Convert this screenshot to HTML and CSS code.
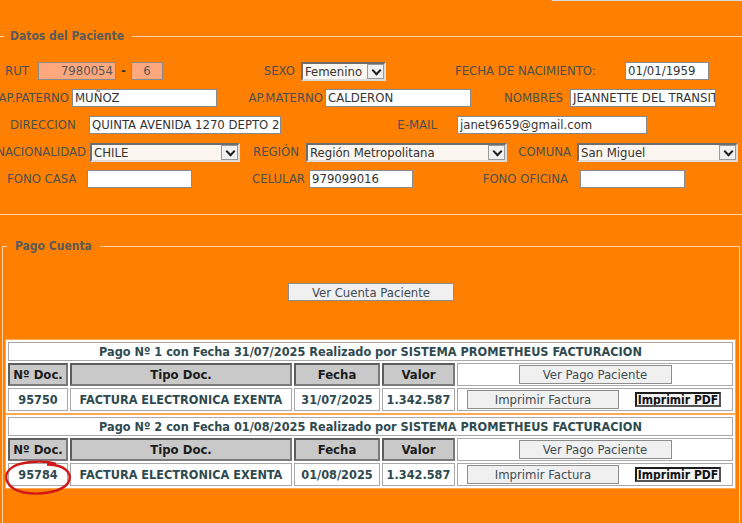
FILE: index.html
```html
<!DOCTYPE html>
<html lang="es">
<head>
<meta charset="utf-8">
<title>Datos del Paciente</title>
<link rel="stylesheet" href="styles.css">
</head>
<body>
<div class="topbar"><div class="sel topsel"><span class="val"></span><span class="arr"></span></div></div>

<fieldset class="fs fs-datos">
  <legend>Datos del Paciente</legend>
  <div class="rows">
    <div class="row">
      <span class="lbl l-rut">RUT</span>
      <span class="inp rut w78 tr">7980054</span>
      <span class="dash">-</span>
      <span class="inp rut w32 tc">6</span>
      <span class="lbl ra l-sexo">SEXO</span>
      <span class="sel w85"><span class="val">Femenino</span><span class="arr"></span></span>
      <span class="lbl l-fecha">FECHA DE NACIMIENTO:</span>
      <span class="inp w84">01/01/1959</span>
    </div>
    <div class="row">
      <span class="lbl ra l-pat">AP.PATERNO</span>
      <span class="inp w145">MUÑOZ</span>
      <span class="lbl ra l-mat">AP.MATERNO</span>
      <span class="inp w146">CALDERON</span>
      <span class="lbl ra l-nom">NOMBRES</span>
      <span class="inp w146">JEANNETTE DEL TRANSITO</span>
    </div>
    <div class="row">
      <span class="lbl l-dir">DIRECCION</span>
      <span class="inp w192">QUINTA AVENIDA 1270 DEPTO 205</span>
      <span class="lbl ra l-mail">E-MAIL</span>
      <span class="inp w190">janet9659@gmail.com</span>
    </div>
    <div class="row">
      <span class="lbl ra l-nac">NACIONALIDAD</span>
      <span class="sel w150"><span class="val">CHILE</span><span class="arr"></span></span>
      <span class="lbl ra l-reg">REGIÓN</span>
      <span class="sel w201"><span class="val">Región Metropolitana</span><span class="arr"></span></span>
      <span class="lbl ra l-com">COMUNA</span>
      <span class="sel w161"><span class="val">San Miguel</span><span class="arr"></span></span>
    </div>
    <div class="row">
      <span class="lbl l-casa">FONO CASA</span>
      <span class="inp w105"></span>
      <span class="lbl ra l-cel">CELULAR</span>
      <span class="inp w104">979099016</span>
      <span class="lbl ra l-ofi">FONO OFICINA</span>
      <span class="inp w105"></span>
    </div>
  </div>
</fieldset>

<fieldset class="fs fs-pago">
  <legend>Pago Cuenta</legend>
  <div class="center"><span class="btn b-cuenta">Ver Cuenta Paciente</span></div>
  <div class="pagos">
    <table class="pt">
      <colgroup><col class="c1"><col class="c2"><col class="c3"><col class="c4"><col class="c5"></colgroup>
      <tr class="tt"><td colspan="5">Pago Nº 1 con Fecha 31/07/2025 Realizado por SISTEMA PROMETHEUS FACTURACION</td></tr>
      <tr class="th"><th>Nº Doc.</th><th>Tipo Doc.</th><th>Fecha</th><th>Valor</th><td><div class="acts one"><span class="btn b-pago">Ver Pago Paciente</span></div></td></tr>
      <tr class="td"><td>95750</td><td>FACTURA ELECTRONICA EXENTA</td><td>31/07/2025</td><td>1.342.587</td><td><div class="acts"><span class="btn b-fact">Imprimir Factura</span><span class="btn b-pdf">Imprimir PDF</span></div></td></tr>
    </table>
    <table class="pt">
      <colgroup><col class="c1"><col class="c2"><col class="c3"><col class="c4"><col class="c5"></colgroup>
      <tr class="tt"><td colspan="5">Pago Nº 2 con Fecha 01/08/2025 Realizado por SISTEMA PROMETHEUS FACTURACION</td></tr>
      <tr class="th"><th>Nº Doc.</th><th>Tipo Doc.</th><th>Fecha</th><th>Valor</th><td><div class="acts one"><span class="btn b-pago">Ver Pago Paciente</span></div></td></tr>
      <tr class="td"><td>95784</td><td>FACTURA ELECTRONICA EXENTA</td><td>01/08/2025</td><td>1.342.587</td><td><div class="acts"><span class="btn b-fact">Imprimir Factura</span><span class="btn b-pdf">Imprimir PDF</span></div></td></tr>
    </table>
  </div>
</fieldset>

<svg class="circle" width="72" height="42" viewBox="0 0 72 42"><path d="M54 6 C42 2 16 3 8 11 C0 19 5 31 22 34.5 C38 37.5 60 34 66 25 C71 17 65 9 52 7 L45 6.5" fill="none" stroke="#d01818" stroke-width="2.4"/></svg>
</body>
</html>
```
FILE: styles.css
```css
* { box-sizing: border-box; }
html, body { margin: 0; padding: 0; }
body {
  background: #ff8000;
  width: 742px;
  height: 523px;
  overflow: hidden;
  position: relative;
  font-family: "DejaVu Sans Condensed", "DejaVu Sans", sans-serif;
  font-stretch: semi-condensed;
  font-size: 13px;
  color: #4b4f52;
}

.topbar { height: 4px; display: flex; padding-left: 551px; }
.topsel { width: 200px; height: 22px; margin-top: -18px; }

.fs { border: 1px solid #ffd4a8; padding: 0; min-width: 0; }
.fs legend {
  font-weight: bold;
  font-size: 12px;
  line-height: 16px;
  color: #5b5b5b;
}
.fs-datos { margin: 24px -20px 0 -20px; }
.fs-datos legend { margin-left: 23px; padding: 0 8px 0 6px; }
.fs-pago { margin: 23px 2px 0 2px; padding-bottom: 60px; }
.fs-pago legend { margin-left: 4px; padding: 0 8px 0 8px; }

.rows { padding: 18px 0 26px 19px; display: flex; flex-direction: column; gap: 9px; }
.row { display: flex; align-items: center; height: 18px; }

.lbl { flex: none; white-space: nowrap; line-height: 18px; color: #4b4f52; }
.ra { text-align: right; }
.l-rut { width: 38px; padding-left: 5px; }
.l-sexo { width: 138px; padding-right: 6px; }
.l-fecha { width: 239px; padding-left: 69px; }
.l-pat { width: 84px; margin-left: -12px; padding-right: 3px; }
.l-mat { width: 108px; padding-right: 2px; }
.l-nom { width: 99px; padding-right: 7px; }
.l-dir { width: 89px; padding-left: 10px; }
.l-mail { width: 176px; padding-right: 20px; }
.l-nac { width: 102px; margin-left: -12px; padding-right: 4px; }
.l-reg { width: 66px; padding-right: 7px; }
.l-com { width: 70px; padding-right: 6px; }
.l-casa { width: 87px; padding-left: 7px; }
.l-cel { width: 117px; padding-right: 4px; }
.l-ofi { width: 167px; padding-right: 12px; }

.inp {
  flex: none;
  height: 18px;
  background: #fff;
  border: 1px solid #8a8a8a;
  color: #333;
  font-size: 13px;
  line-height: 16px;
  padding: 0 2px;
  white-space: nowrap;
  overflow: hidden;
}
.inp.rut { background: #ffa87e; color: #555; }
.tr { text-align: right; }
.tc { text-align: center; }
.dash { flex: none; width: 15px; text-align: center; font-weight: bold; color: #333; line-height: 18px; }

.w32 { width: 32px; } .w78 { width: 78px; } .w84 { width: 84px; } .w85 { width: 85px; }
.w104 { width: 104px; } .w105 { width: 105px; } .w145 { width: 145px; } .w146 { width: 146px; }
.w150 { width: 150px; } .w161 { width: 161px; } .w190 { width: 190px; } .w192 { width: 192px; }
.w201 { width: 201px; }

.sel {
  flex: none;
  display: flex;
  height: 19px;
  background: #fcf6f0;
  border: 2px solid #6e6e6e;
  border-right-color: #dcdcdc;
  border-bottom-color: #dcdcdc;
  color: #333;
  font-size: 13px;
}
.sel .val { flex: 1; padding-left: 2px; line-height: 15px; white-space: nowrap; overflow: hidden; }
.sel .arr {
  flex: none;
  width: 17px;
  background: #f0f0f0;
  border: 1px solid #9a9a9a;
  position: relative;
}
.sel .arr::after {
  content: "";
  position: absolute;
  left: 5px;
  top: 2px;
  width: 5px;
  height: 5px;
  border-right: 2px solid #222;
  border-bottom: 2px solid #222;
  transform: rotate(45deg);
}

.center { display: flex; justify-content: center; padding-top: 29px; }
.btn {
  flex: none;
  display: flex;
  align-items: center;
  justify-content: center;
  height: 18px;
  background: #f0f0f0;
  border: 1px solid #8d8d8d;
  color: #3f4c54;
  font-size: 13px;
  font-weight: normal;
  white-space: nowrap;
}
.b-cuenta { width: 166px; }
.b-pago { width: 153px; height: 19px; }
.b-fact { width: 152px; height: 19px; }
.b-pdf {
  width: 86px;
  height: 15px;
  border: 2px solid #1e1e1e;
  border-right-color: #555;
  border-bottom-color: #555;
  background: #f4f4f4;
  color: #111;
  font-size: 12px;
  font-weight: bold;
  overflow: hidden;
}

.pagos { margin: 38px 3px 0 2px; background: #ffa858; padding: 1px; }
.pt {
  width: 100%;
  table-layout: fixed;
  border-collapse: separate;
  border-spacing: 2px;
  background: #fff;
}
.pt + .pt { margin-top: 2px; }
.c1 { width: 60px; } .c2 { width: 222px; } .c3 { width: 86px; } .c4 { width: 73px; }
.pt td, .pt th {
  border: 1px solid #a9a9a9;
  padding: 0;
  text-align: center;
  font-weight: bold;
  font-size: 12.6px;
  color: #2f4a4f;
  white-space: nowrap;
}
.pt .tt td { height: 19px; line-height: 16px; }
.pt .th th, .pt .th td { height: 23px; }
.pt .td td { height: 23px; }
.pt th {
  background: #c9c9c9;
  border: 2px solid #5e5e5e;
  border-right-color: #7a7a7a;
  border-bottom-color: #7a7a7a;
  color: #1b1b1b;
  font-size: 13px;
}
.acts { display: flex; justify-content: space-between; align-items: center; padding: 0 11px 0 9px; }
.acts.one { justify-content: center; padding: 0; }

.circle { position: absolute; left: 2px; top: 458px; }
```
